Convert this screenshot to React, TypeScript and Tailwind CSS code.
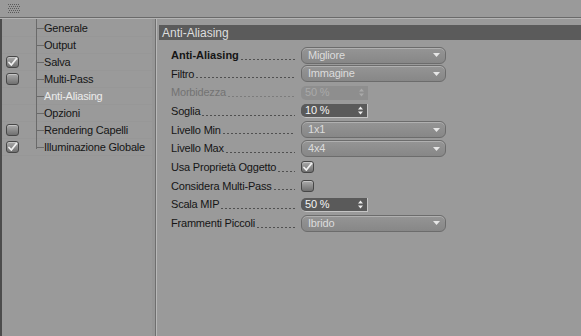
import React from 'react';

type Row = {
  label: string;
  bold?: boolean;
  disabled?: boolean;
  kind: 'select' | 'spin' | 'check';
  value?: string;
  checked?: boolean;
  dark?: boolean;
};

const rows: Row[] = [
  { label: 'Anti-Aliasing', bold: true, kind: 'select', value: 'Migliore' },
  { label: 'Filtro', kind: 'select', value: 'Immagine' },
  { label: 'Morbidezza', disabled: true, kind: 'spin', value: '50 %' },
  { label: 'Soglia', kind: 'spin', value: '10 %', dark: true },
  { label: 'Livello Min', kind: 'select', value: '1x1' },
  { label: 'Livello Max', kind: 'select', value: '4x4' },
  { label: 'Usa Proprietà Oggetto', kind: 'check', checked: true },
  { label: 'Considera Multi-Pass', kind: 'check', checked: false },
  { label: 'Scala MIP', kind: 'spin', value: '50 %', dark: true },
  { label: 'Frammenti Piccoli', kind: 'select', value: 'Ibrido' },
];

const tree = [
  { label: 'Generale' },
  { label: 'Output' },
  { label: 'Salva', check: true, on: true },
  { label: 'Multi-Pass', check: true, on: false },
  { label: 'Anti-Aliasing', active: true },
  { label: 'Opzioni' },
  { label: 'Rendering Capelli', check: true, on: false },
  { label: 'Illuminazione Globale', check: true, on: true },
];

function CheckBox({ on }: { on: boolean }) {
  return (
    <div className="w-[13px] h-[12px] rounded-[3px] border border-[#474747] bg-gradient-to-b from-[#ababab] to-[#707070] shadow-[inset_0_1px_0_#c4c4c4] flex items-center justify-center">
      {on && (
        <svg width="11" height="10" viewBox="0 0 11 10">
          <path d="M2 5.5 L4.3 8 L9.5 1.5" stroke="#f2f2f2" strokeWidth="1.8" fill="none" strokeLinecap="round" strokeLinejoin="round" />
        </svg>
      )}
    </div>
  );
}

function Select({ value }: { value: string }) {
  return (
    <div className="w-[145px] h-[17px] rounded-[6px] border border-[#6c6c6c] bg-gradient-to-b from-[#959595] to-[#878787] shadow-[inset_0_1px_0_#b0b0b0] flex items-center pl-[6px] pr-[5px] text-[#dcdcdc]">
      <span className="flex-1 leading-none">{value}</span>
      <svg width="7" height="4" viewBox="0 0 7 4">
        <path d="M0 0 H7 L3.5 4 Z" fill="#e6e6e6" />
      </svg>
    </div>
  );
}

function Spin({ value, dark, disabled }: { value: string; dark?: boolean; disabled?: boolean }) {
  return (
    <div
      className={
        dark
          ? 'w-[67px] h-[14px] rounded-l-[5px] bg-[#5a5a5a] border-r border-b border-[#c4c4c4] flex items-center pl-[4px] pr-[4px] text-[#f4f4f4]'
          : 'w-[67px] h-[14px] rounded-l-[5px] bg-[#8e8e8e] flex items-center pl-[4px] pr-[4px] text-[#a9a9a9]'
      }
    >
      <span className="flex-1 leading-none">{value}</span>
      <svg width="5" height="9" viewBox="0 0 5 9">
        <path d="M0 3.5 L2.5 0.5 L5 3.5 Z M0 5.5 L2.5 8.5 L5 5.5 Z" fill={disabled ? '#a9a9a9' : '#eeeeee'} />
      </svg>
    </div>
  );
}

export default function App() {
  return (
    <div className="w-[581px] h-[336px] bg-[#9a9a9a] flex flex-col overflow-hidden text-[11px] tracking-[-0.2px] text-[#151515] font-['Liberation_Sans',Arial,sans-serif]">
      {/* top strip */}
      <div className="h-[18px] shrink-0 border-b border-[#6a6a6a] flex items-center pl-[8px]">
        <svg width="12" height="9" viewBox="0 0 12 9">
          {Array.from({ length: 5 }).map((_, r) =>
            Array.from({ length: 6 }).map((_, c) => (
              <rect key={`${r}-${c}`} x={c * 2 + (r % 2)} y={r * 2} width="1" height="1" fill="#5a5a5a" />
            ))
          )}
        </svg>
      </div>
      <div className="h-px bg-[#b4b4b4] shrink-0" />

      <div className="flex-1 flex min-h-0">
        {/* left tree */}
        <div className="w-[156px] shrink-0 border-l-2 border-[#4c4c4c] border-r border-r-[#6e6e6e] flex">
          <div className="w-[150px] relative pt-[1px]">
            <div className="absolute left-[34px] top-0 h-[130px] w-px bg-[#6a6a6a]" />
            {tree.map((t) => (
              <div key={t.label} className="h-[17px] flex items-center border-b border-[#979797]">
                <div className="w-[34px] pl-[4px] flex items-center">{t.check && <CheckBox on={!!t.on} />}</div>
                <div className="w-[8px] h-px bg-[#6a6a6a]" />
                <span className={t.active ? 'text-[#ececec]' : ''}>{t.label}</span>
              </div>
            ))}
          </div>
          <div className="flex-1 bg-[#969696]" />
        </div>

        {/* right panel */}
        <div className="flex-1 border-l border-[#b8b8b8] pt-[6px] pl-[2px]">
          <div className="h-[15px] bg-[#5b5b5b] text-[#dedede] text-[12px] tracking-normal flex items-center pl-[3px]">Anti-Aliasing</div>
          <div className="pt-[6px] pl-[12px]">
            {rows.map((r) => (
              <div key={r.label} className="h-[18.67px] flex items-center">
                <div className="w-[124px] flex items-center whitespace-nowrap">
                  <span className={r.bold ? 'font-bold shrink-0 tracking-normal' : r.disabled ? 'text-[#737373] shrink-0' : 'shrink-0'}>
                    {r.label}
                  </span>
                  <div
                    className={
                      r.disabled
                        ? 'flex-1 h-px mt-[8px] ml-[2px] bg-[linear-gradient(to_right,#7c7c7c_2px,transparent_2px)] bg-[length:4px_1px] bg-repeat-x'
                        : 'flex-1 h-px mt-[8px] ml-[2px] bg-[linear-gradient(to_right,#505050_2px,transparent_2px)] bg-[length:4px_1px] bg-repeat-x'
                    }
                  />
                </div>
                <div className="ml-[6px]">
                  {r.kind === 'select' && <Select value={r.value!} />}
                  {r.kind === 'spin' && <Spin value={r.value!} dark={r.dark} disabled={r.disabled} />}
                  {r.kind === 'check' && <CheckBox on={!!r.checked} />}
                </div>
              </div>
            ))}
          </div>
        </div>
      </div>
    </div>
  );
}
